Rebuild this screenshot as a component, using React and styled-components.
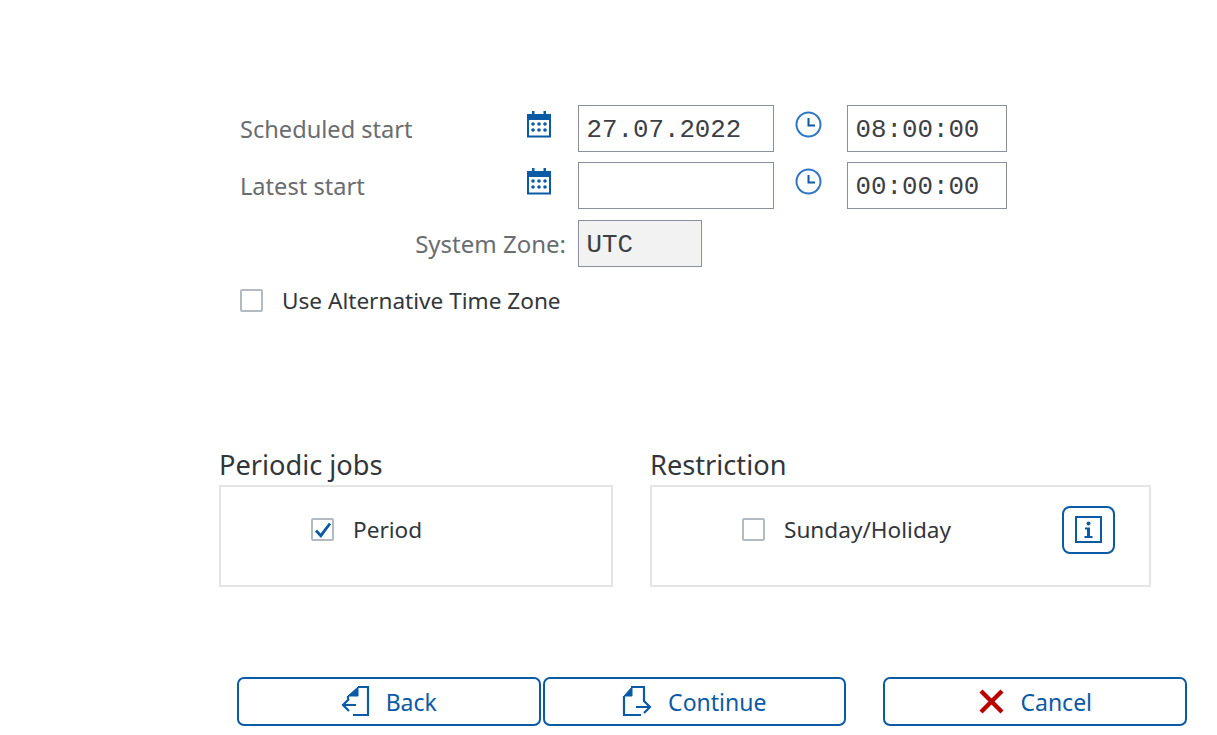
import React from "react";
import styled, { createGlobalStyle } from "styled-components";

const Global = createGlobalStyle`
  html, body { margin: 0; padding: 0; background: #fff; }
  body { font-family: "Noto Sans", "Open Sans", sans-serif; overflow: hidden; }
`;

const Page = styled.div`
  width: 1217px;
  height: 735px;
  padding-top: 105px;
  box-sizing: border-box;
  display: flex;
  flex-direction: column;
`;

const FieldGrid = styled.div`
  margin-left: 240px;
  display: grid;
  grid-template-columns: 287px 51px 196px 73px 160px;
  grid-auto-rows: 47px;
  row-gap: 10.4px;
  align-items: center;
`;

const FieldLabel = styled.div`
  font-size: 23.6px;
  color: #6a6d70;
`;

const ZoneLabel = styled(FieldLabel)`
  grid-column: 1 / span 2;
  text-align: right;
  padding-right: 12px;
  font-size: 24px;
`;

const IconSlot = styled.div`
  display: flex;
  align-items: flex-start;
  height: 100%;
  padding-top: ${(p) => p.$top}px;
  padding-left: ${(p) => p.$left || 0}px;
  box-sizing: border-box;
  margin-left: -1px;
`;

const Input = styled.div`
  box-sizing: border-box;
  height: 47px;
  width: ${(p) => p.$width || "100%"};
  border: 1px solid #89919a;
  background: ${(p) => (p.$readonly ? "#f2f2f2" : "#fff")};
  padding-left: 7.5px;
  font-family: "Liberation Mono", monospace;
  font-size: 25.8px;
  line-height: 49px;
  color: #3c4044;
`;

const CheckRow = styled.label`
  display: flex;
  align-items: center;
  gap: 19px;
  font-size: 22.6px;
  color: #32363a;
`;

const TopCheck = styled(CheckRow)`
  margin: 22px 0 0 240px;
  height: 23px;
`;

const Box = styled.span`
  box-sizing: border-box;
  width: 23px;
  height: 23px;
  flex: none;
  border: 2px solid #b3bac2;
  border-radius: 2px;
  background: #fff;
  display: flex;
  align-items: center;
  justify-content: center;
`;

const Groups = styled.div`
  margin: 136.2px 0 0 219px;
  display: flex;
  gap: 37.5px;
`;

const Group = styled.section`
  width: ${(p) => p.$width}px;
`;

const GroupTitle = styled.h2`
  margin: 0;
  height: 37px;
  font-size: 27.2px;
  line-height: 33px;
  font-weight: 400;
  color: #32363a;
`;

const GroupBody = styled.div`
  box-sizing: border-box;
  height: 102px;
  border: 2px solid #e5e5e5;
  padding: 19px 34px 0 90px;
  display: flex;
  justify-content: space-between;
  align-items: flex-start;
`;

const GroupCheck = styled(CheckRow)`
  height: 48px;
`;

const InfoButton = styled.button`
  box-sizing: border-box;
  width: 53px;
  height: 48px;
  padding: 0;
  border: 2px solid #0a5aa5;
  border-radius: 8px;
  background: #fff;
  display: flex;
  align-items: center;
  justify-content: center;
`;

const Actions = styled.div`
  margin: 90.4px 0 0 237px;
  display: flex;
`;

const ActionButton = styled.button`
  box-sizing: border-box;
  width: 303.5px;
  height: 49px;
  margin-right: ${(p) => p.$after}px;
  padding: 0 0 0 ${(p) => p.$nudge || 0}px;
  border: 2px solid #0a5aa5;
  border-radius: 7px;
  background: #fff;
  color: #0a5aa5;
  font-family: "Noto Sans", sans-serif;
  font-size: 23px;
  display: flex;
  align-items: center;
  justify-content: center;
  gap: 16px;
`;

const Calendar = () => (
  <svg width="26" height="28" viewBox="0 0 26 28">
    <rect x="2" y="5" width="22" height="21.5" fill="#fff" stroke="#0a5aa5" strokeWidth="2" />
    <rect x="1" y="4" width="24" height="6" fill="#0a5aa5" />
    <rect x="6" y="1" width="2.5" height="5" fill="#0a5aa5" />
    <rect x="17.5" y="1" width="2.5" height="5" fill="#0a5aa5" />
    {[7, 13, 19].flatMap((x) =>
      [14, 20].map((y) => <circle key={`${x}-${y}`} cx={x} cy={y} r="1.8" fill="#0a5aa5" />)
    )}
  </svg>
);

const Clock = () => (
  <svg width="27" height="27" viewBox="0 0 27 27" fill="none" stroke="#2f77c4" strokeWidth="2">
    <circle cx="13.5" cy="13.5" r="12" />
    <path d="M13.5 7v7.5H20" stroke="#0a5aa5" />
  </svg>
);

const Check = () => (
  <svg width="18" height="16" viewBox="0 0 18 16" fill="none">
    <path d="M2 8.5l4.8 5.2L16 1.5" stroke="#0a5aa5" strokeWidth="2.8" />
  </svg>
);

const Info = () => (
  <svg width="27" height="27" viewBox="0 0 27 27" fill="none">
    <rect x="1" y="1" width="25" height="25" stroke="#0a5aa5" strokeWidth="2" />
    <circle cx="13.5" cy="7.5" r="2" fill="#0a5aa5" />
    <path d="M10 11.5h5V20h2.5v2h-8v-2H12v-6.5h-2z" fill="#0a5aa5" />
  </svg>
);

const BackIcon = () => (
  <svg width="29" height="31" viewBox="0 0 29 31" fill="none" stroke="#0a5aa5" strokeWidth="2.2">
    <path d="M17 1h10v28H12" />
    <path d="M7 10l10-9v9z" fill="#0a5aa5" strokeWidth="1" />
    <path d="M7 10v3" />
    <path d="M15 19H2M8 13l-6 6 6 6" />
  </svg>
);

const ContinueIcon = () => (
  <svg width="30" height="31" viewBox="0 0 30 31" fill="none" stroke="#0a5aa5" strokeWidth="2.2">
    <path d="M9 1h13v15M2 10v19h17" />
    <path d="M2 10l8-9v9z" fill="#0a5aa5" strokeWidth="1" />
    <path d="M14 21h14M22 15l6 6-6 6" />
  </svg>
);

const CancelIcon = () => (
  <svg width="25" height="25" viewBox="0 0 25 25" fill="none">
    <path d="M2 2l21 21M23 2L2 23" stroke="#bb0000" strokeWidth="4.4" />
  </svg>
);

export default function App() {
  return (
    <Page>
      <Global />
      <FieldGrid>
        <FieldLabel>Scheduled start</FieldLabel>
        <IconSlot $top={5}><Calendar /></IconSlot>
        <Input>27.07.2022</Input>
        <IconSlot $top={6} $left={22}><Clock /></IconSlot>
        <Input>08:00:00</Input>

        <FieldLabel>Latest start</FieldLabel>
        <IconSlot $top={5}><Calendar /></IconSlot>
        <Input />
        <IconSlot $top={6} $left={22}><Clock /></IconSlot>
        <Input>00:00:00</Input>

        <ZoneLabel>System Zone:</ZoneLabel>
        <Input $readonly $width="124px">UTC</Input>
      </FieldGrid>

      <TopCheck><Box />Use Alternative Time Zone</TopCheck>

      <Groups>
        <Group $width={393.5}>
          <GroupTitle>Periodic jobs</GroupTitle>
          <GroupBody>
            <GroupCheck><Box><Check /></Box>Period</GroupCheck>
          </GroupBody>
        </Group>
        <Group $width={501}>
          <GroupTitle>Restriction</GroupTitle>
          <GroupBody>
            <GroupCheck><Box />Sunday/Holiday</GroupCheck>
            <InfoButton aria-label="Information"><Info /></InfoButton>
          </GroupBody>
        </Group>
      </Groups>

      <Actions>
        <ActionButton $after={2}><BackIcon />Back</ActionButton>
        <ActionButton $after={37}><ContinueIcon />Continue</ActionButton>
        <ActionButton $after={0} $nudge={2}><CancelIcon />Cancel</ActionButton>
      </Actions>
    </Page>
  );
}
